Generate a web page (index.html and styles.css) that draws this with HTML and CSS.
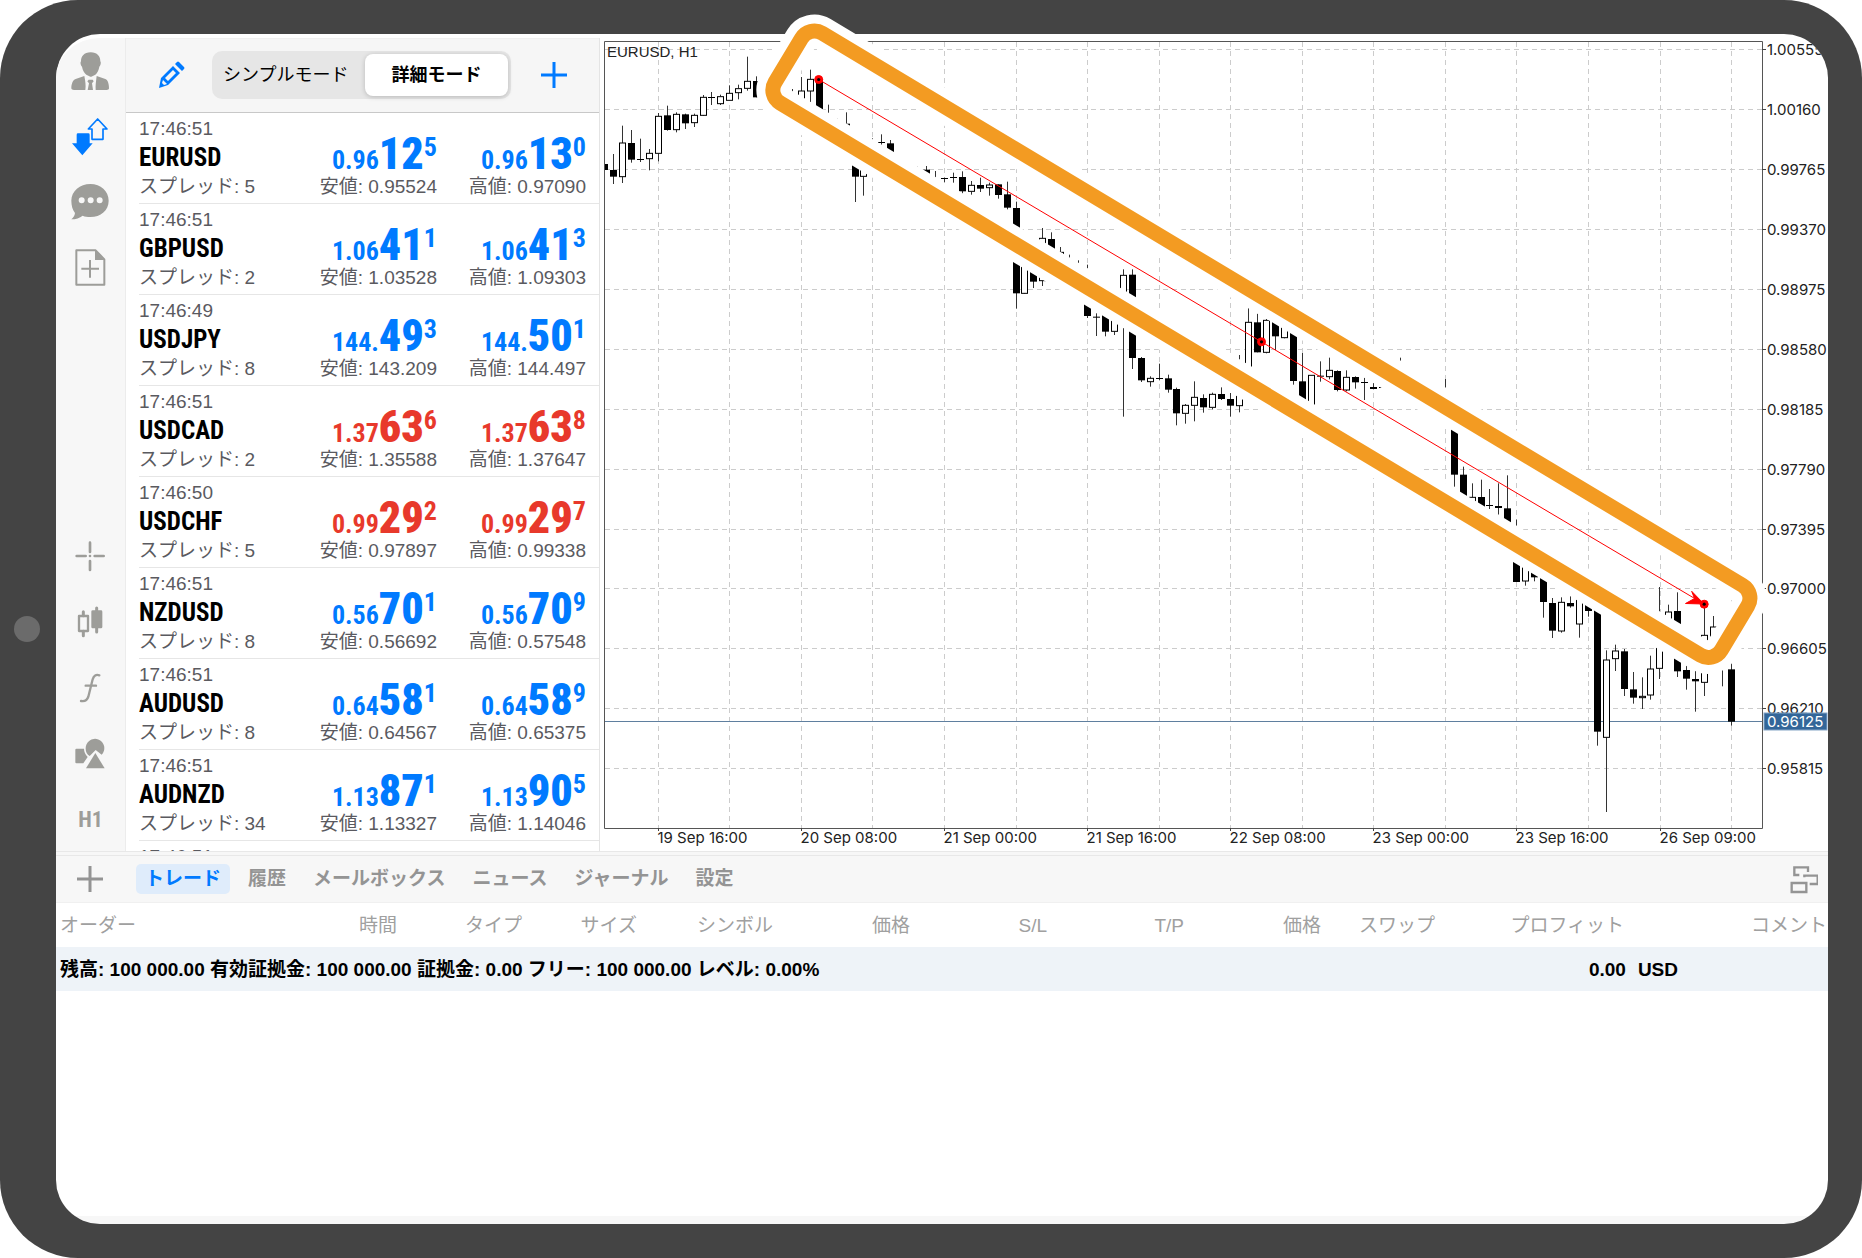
FILE: index.html
```html
<!DOCTYPE html>
<html lang="ja">
<head>
<meta charset="utf-8">
<meta name="viewport" content="width=device-width, initial-scale=1">
<title>EURUSD, H1</title>
<link rel="stylesheet" href="styles.css">
</head>
<body>
<div class="device">
  <span class="home-button"></span>
  <div class="screen">
    <main class="workspace">
      <nav class="sidebar" aria-label="ツール">
        <div class="tools">
          <button class="tool" aria-label="アカウント"><svg viewBox="62 64 120 120"><path d="M121 65c-20 0-29 13-29 27-3 3-1 13 3 16 2 12 8 20 13 24l12 6h3l12-6c5-4 10-12 12-24 4-3 6-13 3-16 0-14-9-27-29-27zM102 136l-26 9c-9 3-13 16-13 28 0 4 4 5 8 5h34c2-14 0-26-3-42zM139 136l26 9c8 3 11 16 11 28 0 4-3 5-7 5h-33c-1-14 1-26 3-42zM115 147h12l3 5-5 6 3 20h-16l4-20-5-6z"/></svg></button>
          <button class="tool tool-active" aria-label="気配値"><svg viewBox="62 260 120 120"><path d="M83 309h31q4 0 4 4v26h9l-31 36-31-36h14v-26q0-4 4-4z"/><path d="M142 266l28 30h-12v31h-33v-31h-11z" fill="none" stroke="currentColor" stroke-width="5" stroke-linejoin="round"/></svg></button>
          <button class="tool" aria-label="チャット"><svg viewBox="62 455 120 120"><path fill-rule="evenodd" d="M120 461c31 0 55 21 55 50s-24 49-55 49c-9 0-16-1-23-4-9 7-20 11-34 11 6-5 10-11 11-19-7-9-11-22-11-37 0-29 26-50 57-50zM94 501a9 9 0 1 0 0 18 9 9 0 0 0 0-18zm27 0a9 9 0 1 0 0 18 9 9 0 0 0 0-18zm27 0a9 9 0 1 0 0 18 9 9 0 0 0 0-18z"/></svg></button>
          <button class="tool" aria-label="新規注文"><svg viewBox="62 651 120 120"><path d="M78 661h58l26 27v76H78z" fill="none" stroke="currentColor" stroke-width="6" stroke-linejoin="round"/><path d="M134 661l28 29h-28z"/><path d="M93 716h53M119 690v53" stroke="currentColor" stroke-width="6"/></svg></button>
        </div>
        <div class="tools tools-chart">
          <button class="tool" aria-label="クロスヘア"><svg viewBox="62 49 120 120"><path d="M119 69v28M119 124v27M79 109h27M133 109h27" fill="none" stroke="currentColor" stroke-width="8" stroke-linecap="round"/><circle cx="119" cy="109" r="4"/></svg></button>
          <button class="tool" aria-label="チャートタイプ"><svg viewBox="62 247 120 120"><path d="M86 289h27v45H86z" fill="none" stroke="currentColor" stroke-width="7" stroke-linejoin="round"/><path d="M99 276v12M99 335v13M139 265v72" stroke="currentColor" stroke-width="9" stroke-linecap="round"/><rect x="123" y="272" width="33" height="54" rx="4"/></svg></button>
          <button class="tool" aria-label="インディケータ"><svg viewBox="62 443 120 120"><path d="M147 465q-15-5-20 12l-13 52q-5 16-22 13M106 496h31" fill="none" stroke="currentColor" stroke-width="7" stroke-linecap="round"/></svg></button>
          <button class="tool" aria-label="オブジェクト"><svg viewBox="62 640 120 120"><path d="M78 684h23q0 13 11 25l-13 19H78q-3 0-3-3v-38q0-3 3-3z"/><path d="M106 684a28 28 0 1 1 48 18l-18-14-18 18q-12-8-12-22z"/><path d="M135 697l28 46h-56z"/></svg></button>
          <button class="tool tool-text">H1</button>
        </div>
      </nav>

      <section class="watchlist" aria-label="気配値">
        <header class="watch-head">
          <button class="icon-btn edit" aria-label="編集"><svg viewBox="0 0 28 28"><path fill-rule="evenodd" d="M2 27l2-10L16 5l7 7L11 24zM6 19l-1 3 2 2 3-1zM8 17l3 3L19 12l-3-3zM18 3l2-2q1-1 2 0l5 5q1 1 0 2l-2 2z"/></svg></button>
          <div class="segmented">
            <button class="segment">シンプルモード</button>
            <button class="segment segment-on">詳細モード</button>
          </div>
          <button class="icon-btn add" aria-label="追加"><svg viewBox="0 0 28 28"><path d="M14 1v26M1 14h26" stroke="currentColor" stroke-width="3"/></svg></button>
        </header>
        <ul class="quotes">
          <li class="quote"><span class="time">17:46:51</span><b class="symbol">EURUSD</b><span class="spread">スプレッド: 5</span><span class="price">0.96<b>12</b><i>5</i></span><span class="price">0.96<b>13</b><i>0</i></span><span class="range">安値: 0.95524</span><span class="range">高値: 0.97090</span></li>
          <li class="quote"><span class="time">17:46:51</span><b class="symbol">GBPUSD</b><span class="spread">スプレッド: 2</span><span class="price">1.06<b>41</b><i>1</i></span><span class="price">1.06<b>41</b><i>3</i></span><span class="range">安値: 1.03528</span><span class="range">高値: 1.09303</span></li>
          <li class="quote"><span class="time">17:46:49</span><b class="symbol">USDJPY</b><span class="spread">スプレッド: 8</span><span class="price">144.<b>49</b><i>3</i></span><span class="price">144.<b>50</b><i>1</i></span><span class="range">安値: 143.209</span><span class="range">高値: 144.497</span></li>
          <li class="quote down"><span class="time">17:46:51</span><b class="symbol">USDCAD</b><span class="spread">スプレッド: 2</span><span class="price">1.37<b>63</b><i>6</i></span><span class="price">1.37<b>63</b><i>8</i></span><span class="range">安値: 1.35588</span><span class="range">高値: 1.37647</span></li>
          <li class="quote down"><span class="time">17:46:50</span><b class="symbol">USDCHF</b><span class="spread">スプレッド: 5</span><span class="price">0.99<b>29</b><i>2</i></span><span class="price">0.99<b>29</b><i>7</i></span><span class="range">安値: 0.97897</span><span class="range">高値: 0.99338</span></li>
          <li class="quote"><span class="time">17:46:51</span><b class="symbol">NZDUSD</b><span class="spread">スプレッド: 8</span><span class="price">0.56<b>70</b><i>1</i></span><span class="price">0.56<b>70</b><i>9</i></span><span class="range">安値: 0.56692</span><span class="range">高値: 0.57548</span></li>
          <li class="quote"><span class="time">17:46:51</span><b class="symbol">AUDUSD</b><span class="spread">スプレッド: 8</span><span class="price">0.64<b>58</b><i>1</i></span><span class="price">0.64<b>58</b><i>9</i></span><span class="range">安値: 0.64567</span><span class="range">高値: 0.65375</span></li>
          <li class="quote"><span class="time">17:46:51</span><b class="symbol">AUDNZD</b><span class="spread">スプレッド: 34</span><span class="price">1.13<b>87</b><i>1</i></span><span class="price">1.13<b>90</b><i>5</i></span><span class="range">安値: 1.13327</span><span class="range">高値: 1.14046</span></li>
          <li class="quote"><span class="time">17:46:51</span></li>
        </ul>
      </section>

      <section class="chart" aria-label="EURUSD, H1">
        <svg id="chart" viewBox="600 38 1228 813">
          <defs><clipPath id="corner"><path d="M600 34H1784A44 44 0 0 1 1828 78V851H600z"/></clipPath></defs>
          <g id="grid" class="grid"></g>
          <path class="last-price" d="M605 721.5H1763"/>
          <g id="candles"></g>
          <path class="frame" d="M604.5 41.5H1762.5V828.5H604.5z"/>
          <g id="axis" class="axis" clip-path="url(#corner)"></g>
          <rect class="tag" x="1764" y="713" width="63" height="17"/>
          <text class="tag-text" x="1767" y="727">0.96125</text>
          <text class="chart-title" x="607" y="57">EURUSD, H1</text>
          <g transform="rotate(30.96)">
            <rect class="halo" x="707" y="-394.5" width="1103.5" height="81.5" rx="15"/>
            <rect class="marker" x="707" y="-394.5" width="1103.5" height="81.5" rx="15"/>
          </g>
          <g class="trend">
            <path d="M818.7 79.5L1704 604"/>
            <path class="arrow" d="M1704 604L1691.7 591.3L1694.5 598.5L1685.5 603.5z"/>
            <circle cx="818.7" cy="79.5" r="4"/><circle cx="1261.5" cy="341.8" r="4"/><circle cx="1704.2" cy="604.2" r="4"/>
            <g class="pins"><circle cx="818.7" cy="79.5" r="1.6"/><circle cx="1261.5" cy="341.8" r="1.6"/><circle cx="1704.2" cy="604.2" r="1.6"/></g>
          </g>
        </svg>
      </section>
    </main>

    <section class="terminal" aria-label="ターミナル">
      <div class="splitter"></div>
      <div class="tabs">
        <button class="new-order" aria-label="新規"><svg viewBox="0 0 28 28"><path d="M14 1v26M1 14h26" stroke="currentColor" stroke-width="3"/></svg></button>
        <button class="tab tab-on">トレード</button>
        <button class="tab">履歴</button>
        <button class="tab">メールボックス</button>
        <button class="tab">ニュース</button>
        <button class="tab">ジャーナル</button>
        <button class="tab">設定</button>
        <button class="layout" aria-label="レイアウト"><svg viewBox="0 0 90 90"><path d="M37 36H22V13h41v14M52 43V38h40v25H68M14 60h44v27H14z" transform="translate(-3 -3)" fill="none" stroke="currentColor" stroke-width="7"/></svg></button>
      </div>
      <table class="orders">
        <colgroup><col class="c-order"><col class="c-time"><col class="c-type"><col class="c-size"><col class="c-symbol"><col class="c-price"><col class="c-price"><col class="c-price"><col class="c-price"><col class="c-swap"><col class="c-profit"><col></colgroup>
        <thead><tr><th>オーダー</th><th>時間</th><th>タイプ</th><th>サイズ</th><th>シンボル</th><th>価格</th><th>S/L</th><th>T/P</th><th>価格</th><th>スワップ</th><th>プロフィット</th><th>コメント</th></tr></thead>
        <tbody><tr><td colspan="10">残高: 100 000.00 有効証拠金: 100 000.00 証拠金: 0.00 フリー: 100 000.00 レベル: 0.00%</td><td colspan="2" class="total"><span>0.00</span><span>USD</span></td></tr></tbody>
      </table>
    </section>
  </div>
</div>
<script src="chart.js"></script>
</body>
</html>
```
FILE: chart.js
```js
const NS = "http://www.w3.org/2000/svg";
const add = (parent, tag, attrs, text) => {
  const el = document.createElementNS(NS, tag);
  for (const key in attrs) el.setAttribute(key, attrs[key]);
  if (text) el.textContent = text;
  document.getElementById(parent).appendChild(el);
};

// Grid and axes
const prices = ["1.00555", "1.00160", "0.99765", "0.99370", "0.98975", "0.98580", "0.98185",
  "0.97790", "0.97395", "0.97000", "0.96605", "0.96210", "0.95815"];
prices.forEach((label, n) => {
  const y = Math.floor(49.8 + n * 59.9) + 0.5;
  add("grid", "path", { d: `M605 ${y}H1762` });
  add("axis", "path", { d: `M1762 ${y}h4` });
  add("axis", "text", { x: 1767, y: y + 5 }, label);
});
for (let n = 0; n < 16; n++) {
  const x = Math.floor(658.3 + n * 71.55) + 0.5;
  add("grid", "path", { d: `M${x} 42V828` });
}
const times = ["19 Sep 16:00", "20 Sep 08:00", "21 Sep 00:00", "21 Sep 16:00", "22 Sep 08:00",
  "23 Sep 00:00", "23 Sep 16:00", "26 Sep 09:00"];
times.forEach((label, n) => {
  const x = Math.floor(658.3 + n * 143.1) + 0.5;
  add("axis", "path", { d: `M${x} 828v3` });
  add("axis", "text", { x: x - 1, y: 843 }, label);
});

// Candles: bar number, kind (1 filled, 0 hollow, 2 wick only), body top, body bottom, high, low.
// Vertical values are stored in thirds of a chart unit.
const bars = [
  [-5,1,510,530,462,552],[-4,0,429,530,377,549],[-3,1,429,479,390,488],[-2,1,477,479,416,486],
  [-1,0,460,476,447,511],[0,0,349,460,339,484],[1,1,346,390,317,392],[2,0,343,389,337,397],
  [3,1,343,370,341,387],[4,0,346,368,341,381],[5,0,292,346,285,348],[6,1,291,293,276,315],
  [7,0,290,311,284,315],[8,0,280,301,256,301],[9,0,266,278,254,298],[10,0,244,265,170,272],
  [11,1,243,292,229,292],[15,2,0,0,267,277],[16,0,273,320,231,320],[17,0,238,273,209,306],
  [18,1,238,345,238,345],[19,2,0,0,314,342],[20,2,0,0,354,358],[21,1,371,400,337,400],
  [22,1,470,530,470,606],[23,0,480,529,480,587],[24,0,427,470,415,470],[25,1,426,428,403,438],
  [26,1,430,480,420,480],[29,2,0,0,498,503],[30,1,509,540,498,540],[31,0,539,570,513,570],
  [32,1,534,536,533,551],[33,1,531,533,518,548],[34,1,531,574,514,582],[35,0,556,574,543,584],
  [36,1,555,566,533,576],[37,0,555,563,548,587],[38,1,553,585,553,596],[39,1,583,623,545,628],
  [40,1,624,880,605,926],[41,0,790,880,790,882],[42,1,790,845,790,864],[43,0,715,842,684,858],
  [44,1,717,790,697,790],[45,0,757,800,741,800],[46,2,0,0,764,775],[47,2,0,0,781,792],
  [48,1,860,948,794,954],[49,1,950,952,940,1008],[50,1,930,995,930,1009],[51,0,940,994,940,1005],
  [52,0,826,920,808,1250],[53,1,824,1074,808,1107],[54,1,1074,1141,1071,1146],[55,0,1135,1145,1129,1160],
  [56,1,1134,1136,1091,1141],[57,1,1135,1169,1124,1178],[58,1,1167,1240,1163,1276],[59,0,1216,1240,1212,1271],
  [60,0,1192,1216,1144,1264],[61,1,1194,1222,1183,1238],[62,0,1183,1222,1178,1228],[63,1,1182,1197,1162,1200],
  [64,1,1197,1217,1179,1250],[65,0,1165,1217,1065,1237],[66,0,967,1150,925,967],[67,1,967,1057,941,1057],
  [68,0,961,1057,957,1060],[69,1,960,1009,960,1050],[70,0,970,1013,970,1015],[71,1,990,1143,990,1154],
  [72,1,1144,1215,1059,1215],[73,0,1126,1230,1126,1230],[74,1,1127,1130,1084,1145],[75,0,1111,1130,1073,1138],
  [76,1,1113,1170,1111,1174],[77,0,1132,1170,1111,1174],[78,1,1131,1147,1129,1166],[79,1,1146,1148,1133,1200],
  [80,1,1161,1167,1149,1168],[81,1,1161,1163,1161,1163],[83,2,0,0,1073,1082],[88,2,0,0,1137,1162],
  [89,1,1280,1424,1280,1460],[90,1,1424,1500,1400,1500],[91,0,1492,1530,1450,1530],[92,1,1491,1540,1439,1540],
  [93,1,1515,1517,1467,1527],[94,1,1518,1524,1450,1544],[95,1,1525,1590,1426,1590],[96,1,1650,1746,1559,1746],
  [97,0,1690,1743,1690,1757],[98,1,1700,1732,1700,1744],[99,1,1720,1806,1720,1853],[100,1,1809,1892,1794,1914],
  [101,0,1807,1893,1792,1898],[102,1,1809,1819,1788,1823],[103,0,1780,1872,1780,1913],[104,1,1800,1833,1800,1850],
  [105,1,1820,2195,1820,2237],[106,0,1980,2212,1951,2436],[107,0,1953,1976,1934,2013],[108,1,1954,2067,1947,2088],
  [109,1,2068,2093,2016,2111],[110,0,2089,2093,2032,2127],[111,0,2007,2085,1967,2099],[112,0,1925,2005,1761,2037],
  [113,0,1836,1880,1814,1880],[114,1,1833,2014,1777,2031],[115,1,2010,2036,1995,2069],[116,1,2037,2044,2012,2135],
  [117,0,1906,2047,1820,2088],[118,0,1881,1960,1848,1960],[119,2,0,0,2010,2059],[120,1,2008,2165,1988,2177]
];
add("candles", "rect", { x: 605, y: 164, width: 3, height: 6 });
for (const [bar, kind, top, bottom, high, low] of bars) {
  const x = Math.floor(658.3 + bar * 8.943) + 0.5;
  const [t, b, h, l] = [top, bottom, high, low].map(v => v / 3);
  add("candles", "path", { class: "wick", d: kind === 0 ? `M${x} ${h}V${t}M${x} ${b}V${Math.max(l, b)}` : `M${x} ${h}V${l}` });
  if (kind === 1) add("candles", "rect", { x: x - 3.5, y: t, width: 7, height: Math.max(b - t, 1) });
  if (kind === 0) add("candles", "rect", { class: "hollow", x: x - 3, y: t, width: 6, height: b - t });
}
```
FILE: styles.css
```css
* { box-sizing: border-box; }
body {
  margin: 0;
  background: #fff;
  color: #000;
  font: 19px/24px "Liberation Sans", "Noto Sans CJK JP", sans-serif;
}
button {
  margin: 0;
  padding: 0;
  border: 0;
  background: none;
  color: inherit;
  font: inherit;
}
svg { display: block; fill: currentColor; }

.device {
  position: relative;
  display: flex;
  min-height: 100vh;
  padding: 34px 34px 34px 56px;
  border-radius: 78px;
  background: #444;
}
.home-button {
  position: absolute;
  left: 14px;
  top: 50%;
  width: 26px;
  height: 26px;
  margin-top: -13px;
  border-radius: 50%;
  background: #6b6b6b;
}
.screen {
  flex: 1;
  min-width: 0;
  display: flex;
  flex-direction: column;
  padding-top: 4px;
  border-radius: 44px;
  background: linear-gradient(to top, #f7f7f7 8px, #fff 8px);
}

.workspace {
  display: grid;
  grid-template-columns: 70px 474px minmax(0, 1fr);
}
.sidebar {
  display: flex;
  flex-direction: column;
  justify-content: space-between;
  border-right: 1px solid #ececec;
  border-top-left-radius: 44px 40px;
  background: #f7f7f7;
  color: #9d9d99;
}
.tools { display: flex; flex-direction: column; padding-top: 1px; }
.tools-chart { margin-bottom: -2px; }
.tool {
  display: grid;
  place-items: center;
  height: 65px;
}
.tools-chart .tool { height: 66px; }
.tool svg { width: 40px; height: 40px; }
.tool-active { color: #007aff; }
.tool-text { font: bold 22px/24px "Roboto Condensed", "Liberation Sans Narrow", "Liberation Sans", sans-serif; }

.watchlist {
  contain: size;
  display: flex;
  flex-direction: column;
  overflow: hidden;
  border-right: 1px solid #e4e4e4;
}
.watch-head {
  flex: none;
  display: flex;
  align-items: center;
  height: 75px;
  padding: 0 31px 2px;
  border-top: 1px solid #f0f0f0;
  border-bottom: 1px solid #c8c8c8;
  background: #f6f6f6;
  color: #007aff;
}
.icon-btn svg { width: 28px; height: 28px; }
.edit { margin-right: 27px; }
.add { margin-left: 29px; }
.segmented {
  flex: 1;
  display: flex;
  height: 48px;
  padding: 3px;
  border-radius: 10px;
  background: #e6e6e6;
  color: #000;
  font-size: 18px;
}
.segment { flex: 1; padding: 0 8px; border-radius: 8px; text-align: left; white-space: nowrap; }
.segment-on {
  flex: 0 0 143px;
  background: #fff;
  box-shadow: 0 1px 5px rgba(0, 0, 0, .2);
  font-weight: bold;
  text-align: center;
}

.quotes { margin: 0; padding: 0 0 0 13px; list-style: none; }
.quote {
  display: grid;
  grid-template: 32px 26px 32px / 1fr 149px 149px;
  padding-right: 13px;
  border-bottom: 1px solid #e6e6e6;
  color: #5a5a5f;
}
.time, .symbol, .spread { grid-column: 1; }
.time, .spread, .range { line-height: 32px; }
.time { grid-row: 1; }
.symbol {
  grid-row: 2;
  color: #000;
  font: bold 25px/26px "Roboto Condensed", "Liberation Sans Narrow", "Liberation Sans", sans-serif;
}
.spread, .range { grid-row: 3; }
.range { text-align: right; }
.price {
  grid-row: 1 / 3;
  align-self: end;
  display: flex;
  align-items: baseline;
  justify-content: flex-end;
  height: 34px;
  color: #007aff;
  font: bold 26px/20px "Roboto Condensed", "Liberation Sans Narrow", "Liberation Sans", sans-serif;
}
.price b { font-size: 44px; line-height: 34px; }
.price i { align-self: flex-start; font-style: normal; }
.down .price { color: #e8392b; }

.chart svg { width: 100%; height: auto; overflow: visible; fill: #000; }
.grid path { fill: none; stroke: #ccc; stroke-dasharray: 5 4; }
.frame { fill: none; stroke: #555; }
.last-price { stroke: #5f7f9f; }
.wick { stroke: #333; }
.hollow { fill: #fff; stroke: #000; }
.axis path { stroke: #444; }
.axis text, .tag-text { fill: #222; font: 15px Inter, sans-serif; }
.tag { fill: #336699; stroke: #86a5c6; }
.axis ~ .tag-text { fill: #fff; }
.chart-title { fill: #222; font: 15px "Liberation Sans", sans-serif; }
.halo, .marker { fill: none; stroke: #fff; stroke-width: 33px; }
.marker { stroke: #f39b22; stroke-width: 15px; }
.trend { fill: #f00; stroke: #f00; }
.pins { fill: #000; stroke: none; }

.terminal { flex: 1; }
.splitter {
  height: 5px;
  border: solid #e8e8e8;
  border-width: 1px 0;
  background: #f7f7f7;
}
.tabs {
  display: flex;
  align-items: center;
  gap: 9px;
  height: 47px;
  padding-right: 10px;
  border-bottom: 1px solid #f0f0f0;
  background: #f7f7f7;
  color: #949494;
}
.tab { height: 30px; padding: 0 9px; border-radius: 5px; font-weight: bold; }
.tab-on { background: #dfecfb; color: #007aff; }
.new-order { width: 71px; padding-left: 20px; }
.new-order svg { width: 28px; height: 28px; }
.layout { margin-left: auto; }
.layout svg { width: 30px; height: 30px; }

.orders { width: 100%; border-collapse: collapse; table-layout: fixed; }
.orders th, .orders td { height: 44px; padding: 2px 1px 0 0; white-space: nowrap; }
.orders th { color: #a0a0a0; font-weight: normal; text-align: right; }
.orders th:first-child { padding-left: 4px; text-align: left; }
.orders td { padding-left: 4px; background: #eef3f8; font-weight: bold; }
.orders .total { padding-right: 150px; text-align: right; }
.total span { margin-left: 12px; }
.c-order { width: 100px; }
.c-time { width: 242px; }
.c-type { width: 125px; }
.c-size { width: 115px; }
.c-symbol { width: 136px; }
.c-price { width: 137px; }
.c-swap { width: 114px; }
.c-profit { width: 189px; }
```
